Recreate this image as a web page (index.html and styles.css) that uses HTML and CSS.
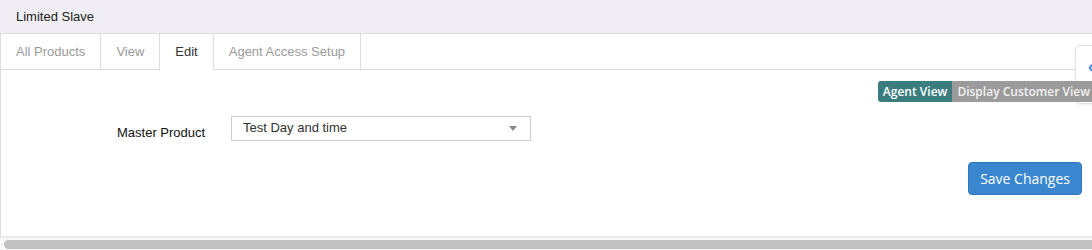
FILE: index.html
```html
<!DOCTYPE html>
<html>
<head>
<meta charset="utf-8">
<link rel="stylesheet" href="styles.css">
</head>
<body>
<div class="page">
  <div class="header">Limited Slave</div>
  <div class="tabs">
    <div class="tab">All Products</div>
    <div class="tab">View</div>
    <div class="tab active">Edit</div>
    <div class="tab">Agent Access Setup</div>
    <div class="tab-fill"></div>
  </div>
  <div class="content">
    <div class="toggle-row">
      <div class="toggle">
        <span class="tg tg-on">Agent View</span><span class="tg tg-off">Display Customer View</span>
      </div>
    </div>
    <div class="form-row">
      <label class="label">Master Product</label>
      <div class="select">
        <span class="select-text">Test Day and time</span>
        <span class="caret"></span>
      </div>
    </div>
    <div class="actions">
      <button class="btn-save">Save Changes</button>
    </div>
  </div>
  <div class="scrollbar"><div class="thumb"></div></div>
  <div class="side-panel"><span class="chev">‹</span></div>
</div>
</body>
</html>
```

FILE: styles.css
```css
html, body {
  margin: 0;
  padding: 0;
  background: #ffffff;
  overflow: hidden;
}
.page {
  position: relative;
  width: 1092px;
  height: 250px;
  font-family: "Liberation Sans", Arial, sans-serif;
  font-size: 13px;
  color: #333;
}
.header {
  height: 33px;
  line-height: 33px;
  padding-left: 16px;
  background: #f0eef4;
  border-bottom: 1px solid #dcdcdc;
  color: #222;
}
.tabs {
  display: flex;
  height: 36px;
  border-left: 1px solid #ddd;
}
.tab {
  padding: 0 15px;
  line-height: 35px;
  color: #9a9a9a;
  border-right: 1px solid #ddd;
  border-bottom: 1px solid #ddd;
}
.tab.active {
  color: #333;
  border-bottom-color: transparent;
}
.tab-fill {
  flex: 1;
  border-bottom: 1px solid #ddd;
}
.content {
  height: 166px;
  border-left: 1px solid #ddd;
  border-bottom: 1px solid #e6e6e6;
  display: flex;
  flex-direction: column;
}
.toggle-row {
  display: flex;
  justify-content: flex-end;
  margin-top: 11px;
  position: relative;
  z-index: 2;
}
.toggle {
  display: flex;
  height: 21px;
  font-family: "Open Sans", sans-serif;
  font-size: 12px;
  font-weight: 600;
}
.tg {
  line-height: 21px;
  padding: 0 5px;
}
.tg-on {
  background: #3b7d7f;
  color: #fff;
  border-radius: 3px 0 0 3px;
}
.tg-off {
  background: #9b9b9b;
  color: #f2f2f2;
  padding-right: 2px;
}
.form-row {
  display: flex;
  align-items: center;
  margin-top: 14px;
  padding-left: 116px;
}
.label {
  width: 114px;
  color: #111;
  padding-top: 8px;
}
.select {
  width: 274px;
  height: 23px;
  border: 1px solid #cfcfcf;
  display: flex;
  align-items: center;
  justify-content: space-between;
  padding: 0 13px 0 11px;
}
.select-text {
  color: #333;
  margin-top: -3px;
}
.caret {
  width: 0;
  height: 0;
  border-left: 4px solid transparent;
  border-right: 4px solid transparent;
  border-top: 5px solid #888;
}
.actions {
  display: flex;
  justify-content: flex-end;
  margin-top: 21px;
  padding-right: 10px;
}
.btn-save {
  height: 33px;
  padding: 0 11px;
  background: #3a87cf;
  border: 1px solid #3178bb;
  border-radius: 4px;
  color: #fff;
  font-family: "Open Sans", sans-serif;
  font-size: 14px;
  font-weight: 500;
}
.scrollbar {
  height: 13px;
  background: #f7f7f7;
  border-top: 1px solid #ececec;
  padding: 2px 0 0 4px;
  box-sizing: border-box;
}
.thumb {
  height: 9px;
  background: #c1c1c1;
  border-radius: 5px 0 0 5px;
}
.side-panel {
  position: absolute;
  z-index: 1;
  top: 45px;
  left: 1075px;
  width: 30px;
  height: 57px;
  background: #fff;
  border: 1px solid #e2e2e2;
  border-radius: 5px;
  box-shadow: 0 1px 3px rgba(0,0,0,0.08);
}
.chev {
  position: absolute;
  left: 12px;
  top: 12px;
  color: #2f7fd4;
  font-size: 16px;
  font-weight: bold;
}
```
